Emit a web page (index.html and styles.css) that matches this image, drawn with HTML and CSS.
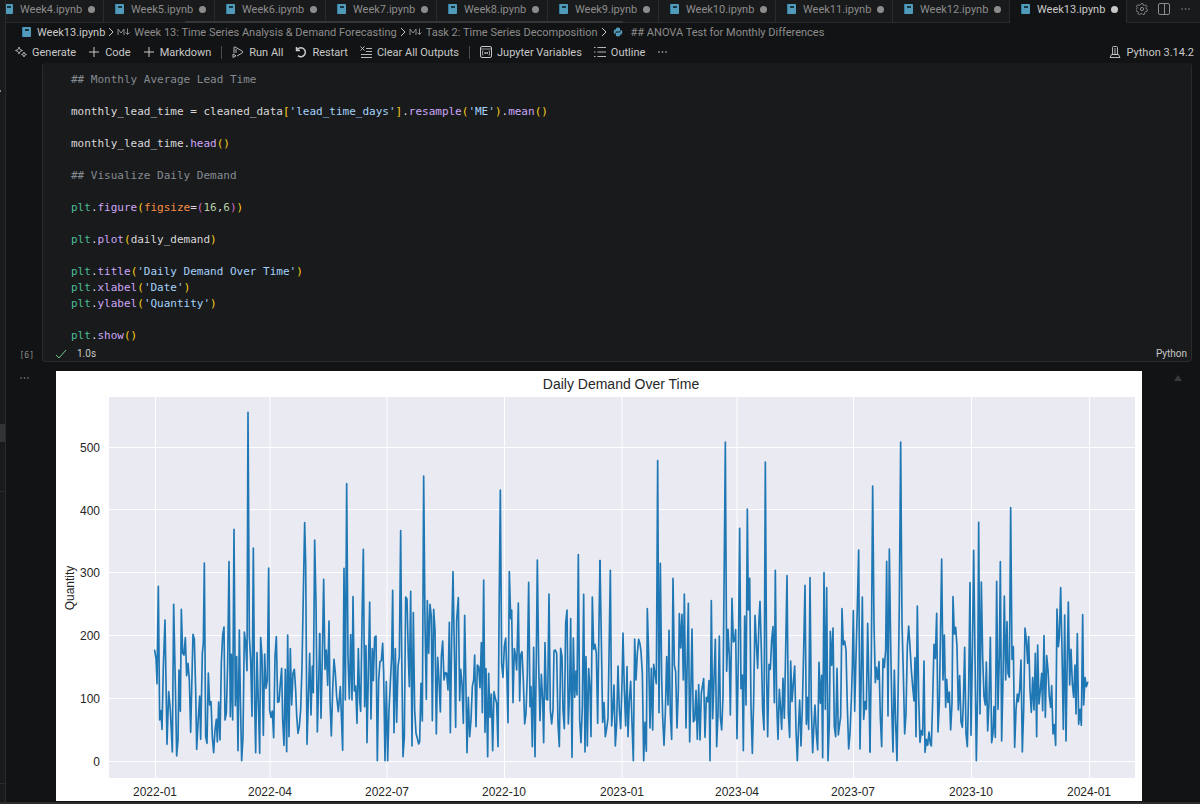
FILE: index.html
```html
<!DOCTYPE html>
<html lang="en">
<head>
    <meta charset="UTF-8">
    <title>Week13.ipynb</title>
    <link rel="stylesheet" href="styles.css">
</head>
<body>

    <!-- Shared icons -->
    <svg class="sprite" aria-hidden="true">
        <symbol id="notebook" viewBox="0 0 10 12">
            <rect x="0" y="1" width="2" height="10" fill="#2f7fa6"/>
            <rect x="1" y="1" width="8" height="10" rx="1" fill="#519aba"/>
            <rect x="3" y="3" width="4" height="2" fill="#163846"/>
        </symbol>
        <symbol id="plus" viewBox="0 0 12 12">
            <path d="M6 1v10M1 6h10" stroke="currentColor" fill="none"/>
        </symbol>
        <symbol id="more" viewBox="0 0 12 12">
            <circle cx="2" cy="6" r=".8"/><circle cx="5.500" cy="6" r=".8"/><circle cx="9" cy="6" r=".8"/>
        </symbol>
        <symbol id="chevron" viewBox="0 0 6 12">
            <path d="M1 2l4 4-4 4" stroke="currentColor" fill="none"/>
        </symbol>
        <symbol id="markdown" viewBox="0 0 13 12">
            <path d="M1 9V3l3 4 3-4v6M10.500 2.500v6M8.500 6.500l2 2 2-2" stroke="currentColor" fill="none"/>
        </symbol>
    </svg>

    <aside class="sidebar">
        <div class="sidebar-mark"></div>
        <div class="sidebar-selected"></div>
        <div class="sidebar-section"></div>
        <div class="sidebar-bottom"></div>
    </aside>

    <main class="editor">
        <header class="tab-bar">
            <div class="tabs" role="tablist">
                <button class="tab" role="tab"><svg class="file-icon"><use href="#notebook"/></svg>Week4.ipynb<span class="dot"></span></button>
                <button class="tab" role="tab"><svg class="file-icon"><use href="#notebook"/></svg>Week5.ipynb<span class="dot"></span></button>
                <button class="tab" role="tab"><svg class="file-icon"><use href="#notebook"/></svg>Week6.ipynb<span class="dot"></span></button>
                <button class="tab" role="tab"><svg class="file-icon"><use href="#notebook"/></svg>Week7.ipynb<span class="dot"></span></button>
                <button class="tab" role="tab"><svg class="file-icon"><use href="#notebook"/></svg>Week8.ipynb<span class="dot"></span></button>
                <button class="tab" role="tab"><svg class="file-icon"><use href="#notebook"/></svg>Week9.ipynb<span class="dot"></span></button>
                <button class="tab wide" role="tab"><svg class="file-icon"><use href="#notebook"/></svg>Week10.ipynb<span class="dot"></span></button>
                <button class="tab wide" role="tab"><svg class="file-icon"><use href="#notebook"/></svg>Week11.ipynb<span class="dot"></span></button>
                <button class="tab wide" role="tab"><svg class="file-icon"><use href="#notebook"/></svg>Week12.ipynb<span class="dot"></span></button>
                <button class="tab wide active" role="tab" aria-selected="true"><svg class="file-icon"><use href="#notebook"/></svg>Week13.ipynb<span class="dot"></span></button>
                <div class="tab-scroll"></div>
            </div>
            <div class="tab-actions">
                <button aria-label="Settings">
                    <svg class="icon" viewBox="0 0 12 12"><path d="M5 .7h2l.3 1.500 1 .5 1.400-.8 1.300 1.500-1 1.200.3 1.400 1.200.6-.5 1.800-1.500.1-.9 1.100.2 1.400-1.800.7-1-1.200-1.300.1-.9 1.100-1.800-.9.300-1.500-.8-1-1.500-.2-.3-1.700 1.300-.8.300-1.300-.9-1.200 1.300-1.400 1.400.7 1-.5z" stroke="currentColor" stroke-width=".9" fill="none"/><circle cx="6" cy="6" r="1.600" stroke="currentColor" fill="none"/></svg>
                </button>
                <button aria-label="Split Editor">
                    <svg class="icon" viewBox="0 0 12 12"><rect x=".5" y=".5" width="11" height="11" rx="1.500" stroke="currentColor" fill="none"/><path d="M6.500 1v10" stroke="currentColor"/></svg>
                </button>
                <button aria-label="More Actions"><svg class="icon"><use href="#more"/></svg></button>
            </div>
        </header>

        <nav class="breadcrumb">
            <a href="#" class="current"><svg class="file-icon"><use href="#notebook"/></svg>Week13.ipynb</a>
            <svg class="chevron"><use href="#chevron"/></svg>
            <a href="#"><svg class="md-icon"><use href="#markdown"/></svg>Week 13: Time Series Analysis &amp; Demand Forecasting</a>
            <svg class="chevron"><use href="#chevron"/></svg>
            <a href="#"><svg class="md-icon"><use href="#markdown"/></svg>Task 2: Time Series Decomposition</a>
            <svg class="chevron"><use href="#chevron"/></svg>
            <a href="#" class="cell-link">
                <svg class="python-icon" viewBox="0 0 12 12"><path d="M3.500 3V1.500Q6-.5 8.500 1.500V4.500Q8.500 5.500 7.500 5.500H4.500Q3 5.500 3 7v1.500H2Q-.5 6 2 3zM8.500 9v1.500Q6 12.500 3.500 10.500V7.500Q3.500 6.500 4.500 6.500H7.500Q9 6.500 9 5V3.500h1Q12.500 6 10 9z" fill="#519aba"/></svg>
                ## ANOVA Test for Monthly Differences
            </a>
        </nav>

        <div class="toolbar">
            <button>
                <svg class="icon" viewBox="0 0 12 12"><path d="M4 1l1 2.500 2.500 1L5 5.500 4 8 3 5.500.5 4.500 3 3.500zM9 6l.7 1.800 1.800.7-1.800.7L9 11l-.7-1.800-1.800-.7 1.800-.7z" stroke="currentColor" stroke-width=".8" fill="none"/></svg>
                Generate
            </button>
            <button><svg class="icon"><use href="#plus"/></svg>Code</button>
            <button><svg class="icon"><use href="#plus"/></svg>Markdown</button>
            <span class="separator"></span>
            <button>
                <svg class="icon" viewBox="0 0 12 12"><path d="M2 7V1.500Q2 .5 3 1l7.500 4.300q.9.700 0 1.400L5 10M4 3v4M1 11.500V8l3 1.800z" stroke="currentColor" stroke-width=".9" fill="none"/></svg>
                Run All
            </button>
            <button>
                <svg class="icon" viewBox="0 0 12 12"><path d="M1.500 1v3.500H5M1.800 4.300A4.500 4.500 0 1 1 3 9.700" stroke="currentColor" stroke-width="1.500" fill="none"/></svg>
                Restart
            </button>
            <button>
                <svg class="icon" viewBox="0 0 12 12"><path d="M.5.5l4 4M4.500.5l-4 4M6 2.500h6M6 5.500h6M1 8.500h11M1 11.500h11" stroke="currentColor" stroke-width=".9"/></svg>
                Clear All Outputs
            </button>
            <span class="separator"></span>
            <button>
                <svg class="icon" viewBox="0 0 12 12"><rect x=".5" y=".5" width="11" height="11" rx="1.500" stroke="currentColor" fill="none"/><path d="M1 3h10M3.500 5H2.500v4H3.500M8.500 5h1v4H8.500M4.500 6l1.300 2M5.800 6L4.500 8M6.500 6L7.800 8M7.800 6L6.500 8" stroke="currentColor" stroke-width=".7" fill="none"/></svg>
                Jupyter Variables
            </button>
            <button>
                <svg class="icon" viewBox="0 0 12 12"><path d="M0 1.500h1.500M0 6h1.500M0 10.500h1.500M3.500 1.500H12M3.500 6H12M3.500 10.500H12" stroke="currentColor" stroke-width=".9"/></svg>
                Outline
            </button>
            <button aria-label="More"><svg class="icon"><use href="#more"/></svg></button>
            <button class="kernel">
                <svg class="icon" viewBox="0 0 12 12"><path d="M3.500 8.500v-7q0-1 1-1h3q1 0 1 1v7zM5 3h2M5 5h2M6 6v2M2.500 8.500h7l1.500 3H1z" stroke="currentColor" stroke-width=".9" fill="none"/></svg>
                Python 3.14.2
            </button>
        </div>

        <section class="notebook">
            <div class="gutter"><span class="exec-count">[6]</span></div>
            <div class="cell">
<pre class="code"><code><span class="cm">## Monthly Average Lead Time</span>

monthly_lead_time = cleaned_data<span class="b1">[</span><span class="st">'lead_time_days'</span><span class="b1">]</span>.<span class="fn">resample</span><span class="b1">(</span><span class="st">'ME'</span><span class="b1">)</span>.<span class="fn">mean</span><span class="b1">()</span>

monthly_lead_time.<span class="fn">head</span><span class="b1">()</span>

<span class="cm">## Visualize Daily Demand</span>

<span class="md">plt</span>.<span class="fn">figure</span><span class="b1">(</span><span class="pr">figsize</span>=<span class="b2">(</span><span class="nu">16</span>,<span class="nu">6</span><span class="b2">)</span><span class="b1">)</span>

<span class="md">plt</span>.<span class="fn">plot</span><span class="b1">(</span>daily_demand<span class="b1">)</span>

<span class="md">plt</span>.<span class="fn">title</span><span class="b1">(</span><span class="st">'Daily Demand Over Time'</span><span class="b1">)</span>
<span class="md">plt</span>.<span class="fn">xlabel</span><span class="b1">(</span><span class="st">'Date'</span><span class="b1">)</span>
<span class="md">plt</span>.<span class="fn">ylabel</span><span class="b1">(</span><span class="st">'Quantity'</span><span class="b1">)</span>

<span class="md">plt</span>.<span class="fn">show</span><span class="b1">()</span></code></pre>
                <div class="cell-status">
                    <svg class="check" viewBox="0 0 12 12"><path d="M1 7l3 3 7-8" stroke="#73c991" fill="none"/></svg>
                    <span>1.0s</span>
                    <button class="language">Python</button>
                </div>
            </div>

            <div class="gutter"><button class="output-menu" aria-label="Output actions"><svg class="icon"><use href="#more"/></svg></button></div>
            <div class="output">
                <svg class="chart" viewBox="0 0 1086 430" role="img" aria-label="Daily Demand Over Time">
                    <rect width="1086" height="430" fill="#fff"/>
                    <rect x="53" y="26" width="1026" height="381" fill="#eaeaf2"/>
                    <path class="grid" d="M53 76.500h1026M53 138.500h1026M53 201.500h1026M53 264.500h1026M53 327.500h1026M53 390.500h1026M99.500 26v381M214 26v381M331 26v381M448.500 26v381M566 26v381M681 26v381M797.500 26v381M915.500 26v381M1033.500 26v381"/>

                    <!-- Daily series, half a year per path -->
                    <svg x="0" y="0" width="1086" height="430" viewBox="0 0 3258 1290">
                        <g class="series">
                            <path transform="translate(-18 57)" d="M314 781 318 805 321 881 325 589 329 990 333 962 336 1018 340 830 345 690 351 1063 356 905 361 960 367 1086 371 643 376 880 380 1098 384 1050 387 840 391 964 394 658 398 790 402 795 406 743 410 857 414 820 418 870 422 1027 425 900 429 733 433 748 437 900 440 1078 444 1000 449 918 452 1048 457 790 460 760 463 519 467 1040 471 1060 475 849 479 945 483 935 487 1040 491 1088 495 1020 499 988 502 1056 506 936 510 1050 514 820 518 735 522 711 525 990 529 970 533 820 537 515 541 980 544 793 548 990 552 418 556 947 560 800 564 1082 568 720 571 920 575 1112 579 1040 583 726 587 760 591 842 594 67 598 740 602 810 606 979 610 474 614 940 617 1088 621 788 625 940 629 1090 632 743 636 800 640 1036 644 792 648 895 652 870 656 534 659 960 663 982 667 963 671 1043 675 800 679 740 683 937 687 935 691 880 695 835 698 990 702 1066 706 838 710 1085 713 735 717 1040 721 776 725 945 729 850 733 838 737 900 740 975 744 1030 748 1010 752 960 756 830 760 610 764 398 767 520 771 1063 775 930 779 790 783 975 787 828 790 908 794 450 798 640 802 1026 806 880 809 731"/>
                            <path transform="translate(792 57)" d="M-1 731 3 985 7 800 11 568 15 838 19 780 23 886 27 693 30 930 34 1038 38 900 42 808 46 850 50 920 55 965 61 890 68 1081 72 535 76 930 80 281 84 800 88 927 92 734 96 930 99 620 103 903 107 888 111 1000 115 776 119 930 122 964 126 700 130 478 134 950 138 767 141 1058 145 850 149 636 153 987 157 776 160 872 164 742 168 738 172 1112 176 870 180 815 184 812 188 760 191 850 195 1112 199 875 203 1112 207 960 211 880 215 800 218 601 222 1028 226 776 230 997 234 830 238 800 242 422 245 780 249 1100 253 1040 257 621 261 627 265 800 268 890 272 604 276 1068 280 668 284 960 288 1030 292 1045 296 1062 299 1055 303 880 307 993 311 258 315 700 319 928 322 632 326 790 330 643 334 680 337 992 341 658 345 720 349 1032 353 802 357 870 361 966 364 800 368 753 372 870 376 848 380 850 384 900 388 697 391 1028 395 750 399 545 403 780 407 1012 410 690 415 623 419 932 422 838 426 880 430 1000 434 676 438 900 441 1088 445 922 449 1040 453 990 457 890 461 870 464 795 468 1010 472 825 476 830 480 893 484 758 487 968 491 570 495 1027 498 836 503 1100 506 850 510 982 514 912 518 1082 522 905 526 925 530 940 534 1070 537 700 541 300 545 820 549 862 553 770 557 744 561 870 564 998 568 545 572 686 575 660 579 938 583 776 587 800 590 840 595 639 599 933 602 795 606 785 610 870 614 1002 618 970 622 850 626 577 630 950 633 890 637 1070 641 772 645 1100 649 800 652 510 656 820 660 992 664 853 668 930 671 1058 675 758 679 928 683 930 687 612 691 960 695 1002 699 960 702 782 706 780 710 790 714 1000 718 1070 722 775 726 800 729 960 733 1016 737 700 741 660 745 1002 749 900 752 686 756 1102 760 744 764 922 768 843 771 915 775 494 779 990 783 1058 787 950 791 613 795 1086 798 800 802 1068 806 836 810 900 813 1040 817 621 821 778 825 763 829 790 833 1000 837 700 840 512"/>
                            <path transform="translate(1602 57)" d="M30 512 34 750 38 997 42 938 46 1040 50 1015 54 985 57 800 61 541 65 1008 69 950 72 885 76 1068 80 1000 84 828 88 960 92 1016 96 880 99 729 103 900 107 1008 111 830 114 1040 118 930 122 874 126 1000 130 1112 134 747 138 870 142 790 146 748 150 762 153 785 157 850 161 1112 165 997 169 1084 172 656 176 800 180 1014 184 835 188 1020 191 823 195 850 199 881 203 212 207 968 211 520 215 860 218 980 222 1066 226 970 230 800 234 945 237 721 241 970 245 1048 249 565 253 825 257 845 261 1014 265 900 268 671 272 774 276 673 280 870 283 612 288 1014 291 850 295 640 299 1056 303 880 306 717 310 995 314 990 318 902 322 1048 326 884 330 1050 334 910 337 890 341 866 345 1042 349 922 353 935 357 872 360 1112 364 632 368 986 372 870 376 748 380 1070 384 970 388 738 391 980 395 1020 399 920 403 500 406 156 410 844 414 718 418 800 421 975 426 625 430 756 434 750 437 719 441 1046 445 800 449 415 453 896 457 855 460 1082 464 678 468 945 472 357 475 660 479 565 483 950 487 1090 491 930 495 676 499 760 503 835 507 690 510 634 514 780 518 960 522 1020 526 216 530 860 533 1040 537 823 541 838 545 750 549 710 553 938 556 541 560 940 564 1048 568 898 572 960 575 1018 579 865 583 985 587 780 591 557 595 970 599 1042 602 813 606 935 610 880 614 828 618 1020 622 1112 626 1000 629 930 633 1068 637 950 641 780 645 586 649 1003 652 922 656 1018 660 563 664 950 668 1088 672 1000 675 945 679 1030 683 1080 687 817 691 940 695 856 698 1103 702 548 706 958 710 593 714 1112 718 1000 721 724 725 826 729 714 733 1010 737 1040 741 835 745 1035 748 1010 752 980 756 656 760 764 764 753 768 780 772 950 776 1077 780 1030 784 930 787 830 790 662 794 964 798 800 802 650 806 480 810 1077 813 900 817 621 821 988 825 935 829 958 833 700 837 900 840 1086"/>
                            <path transform="translate(2412 57)" d="M30 1086 34 800 38 288 42 700 46 878 49 832 53 868 57 815 61 980 65 1070 69 806 73 832 77 780 80 514 84 978 88 477 92 760 96 980 99 1086 103 840 107 1000 111 1112 115 860 118 640 122 156 126 700 130 850 134 1032 138 970 142 770 146 708 150 770 154 840 158 890 162 933 165 803 168 1040 172 648 176 920 180 1057 184 1022 188 1035 192 813 195 1087 199 1048 203 1066 207 1026 211 1062 214 1068 218 930 222 763 226 805 230 670 234 1026 238 940 241 760 245 507 249 870 253 735 257 952 260 868 264 937 268 906 272 1020 276 940 279 620 283 732 287 712 291 770 295 960 299 857 303 995 307 1012 310 940 314 772 318 1030 322 1070 326 900 330 578 333 1036 337 800 341 481 345 800 349 1112 353 900 356 397 360 972 364 576 368 800 372 920 376 945 379 816 383 1023 387 940 391 742 395 1058 399 1030 402 950 406 1042 410 574 414 958 418 800 421 515 425 1053 429 870 433 618 437 870 441 695 444 850 448 862 452 353 456 808 460 770 464 1072 468 960 472 912 475 935 479 900 483 810 487 1086 491 960 495 714 499 750 503 820 506 740 510 900 514 967 518 863 522 960 526 790 530 1040 533 765 537 942 541 900 545 850 548 962 552 737 556 982 560 797 564 840 568 920 572 952 575 887 579 1032 583 1004 587 1066 591 657 595 770 598 740 602 593 606 780 610 1018 614 675 618 1053 621 850 625 636 629 885 633 778 637 880 641 922 645 825 648 972 652 731 656 1003 660 958 664 1006 668 674 671 945 675 863 679 890 683 877"/>
                        </g>
                    </svg>

                    <text class="title" x="565" y="18">Daily Demand Over Time</text>
                    <text class="axis" transform="translate(18 217) rotate(-90)">Quantity</text>
                    <g class="ticks-y">
                        <text x="44" y="81">500</text>
                        <text x="44" y="144">400</text>
                        <text x="44" y="206">300</text>
                        <text x="44" y="269">200</text>
                        <text x="44" y="332">100</text>
                        <text x="44" y="395">0</text>
                    </g>
                    <g class="axis">
                        <text x="99" y="425">2022-01</text>
                        <text x="214" y="425">2022-04</text>
                        <text x="331" y="425">2022-07</text>
                        <text x="448" y="425">2022-10</text>
                        <text x="566" y="425">2023-01</text>
                        <text x="681" y="425">2023-04</text>
                        <text x="797" y="425">2023-07</text>
                        <text x="915" y="425">2023-10</text>
                        <text x="1033" y="425">2024-01</text>
                    </g>
                </svg>
                <span class="scroll-arrow"></span>
            </div>
        </section>
    </main>

</body>
</html>
```
FILE: styles.css
```css
:root {
    --editor-bg: #121314;
    --panel-bg: #191a1b;
    --border: #2a2b2c;
    --text: #c8c8c8;
    --muted: #8c8c8c;
}

* {
    box-sizing: border-box;
}

body {
    margin: 0;
    height: 100vh;
    display: flex;
    overflow: hidden;
    background-color: var(--editor-bg);
    color: var(--text);
    font-family: Roboto, "Segoe UI", sans-serif;
    font-size: 11px;
}

button {
    display: flex;
    align-items: center;
    padding: 0;
    border: none;
    background: none;
    color: inherit;
    font: inherit;
    white-space: nowrap;
    cursor: pointer;
}

a {
    color: inherit;
    text-decoration: none;
}

.sprite {
    position: absolute;
    width: 0;
    height: 0;
}

svg {
    flex: none;
}

.icon {
    width: 12px;
    height: 12px;
    fill: currentColor;
}

.file-icon {
    width: 10px;
    height: 12px;
}

/* Sidebar edge */
.sidebar {
    flex: none;
    width: 6px;
    display: flex;
    flex-direction: column;
    background-color: var(--panel-bg);
    border-right: 1px solid var(--border);
}

.sidebar-mark {
    width: 1px;
    height: 2px;
    margin-top: 90px;
    background-color: var(--muted);
}

.sidebar-selected {
    height: 18px;
    margin-top: 332px;
    background-color: #323334;
}

.sidebar-section {
    height: 50px;
    border-bottom: 1px solid var(--border);
}

.sidebar-bottom {
    margin-top: auto;
    height: 21px;
    border-top: 1px solid var(--border);
    border-bottom: 2px solid var(--border);
}

.editor {
    flex: 1;
    min-width: 0;
    display: flex;
    flex-direction: column;
    border-bottom: 2px solid var(--border);
}

/* Tabs */
.tab-bar {
    flex: none;
    display: flex;
    height: 23px;
    background-color: var(--panel-bg);
}

.tabs {
    position: relative;
    flex: 1;
    display: flex;
    justify-content: flex-end;
    overflow: hidden;
}

.tab {
    flex: none;
    width: 111px;
    gap: 6px;
    padding: 0 8px 4px 11px;
    border-right: 1px solid var(--border);
    border-bottom: 1px solid var(--border);
    color: var(--muted);
}

.tab.wide {
    width: 117px;
}

.tab.active {
    background-color: var(--editor-bg);
    border-bottom-color: var(--editor-bg);
    color: var(--text);
}

.dot {
    flex: none;
    width: 7px;
    height: 7px;
    margin-left: auto;
    border-radius: 50%;
    background-color: currentColor;
}

.tab-scroll {
    position: absolute;
    left: 16%;
    bottom: 0;
    width: 39%;
    height: 2px;
    background-color: #343536;
}

.tab-actions {
    flex: none;
    display: flex;
    justify-content: flex-end;
    gap: 10px;
    width: 73px;
    padding: 0 8px 4px 0;
    border-bottom: 1px solid var(--border);
    color: var(--muted);
}

/* Breadcrumb */
.breadcrumb {
    flex: none;
    display: flex;
    align-items: center;
    gap: 3px;
    height: 18px;
    padding-left: 16px;
    color: var(--muted);
    white-space: nowrap;
}

.breadcrumb a {
    display: flex;
    align-items: center;
    gap: 4px;
}

.breadcrumb .current {
    gap: 5px;
    color: var(--text);
}

.breadcrumb .cell-link {
    gap: 8px;
    padding-left: 3px;
}

.chevron {
    width: 6px;
    height: 12px;
    color: var(--text);
}

.md-icon {
    width: 13px;
    height: 12px;
}

.python-icon {
    width: 10px;
    height: 10px;
}

/* Notebook toolbar */
.toolbar {
    flex: none;
    display: flex;
    align-items: center;
    gap: 12px;
    height: 22px;
    padding: 0 6px 0 9px;
}

.toolbar button {
    gap: 5px;
}

.separator {
    width: 1px;
    height: 13px;
    margin: 0 -2px;
    background-color: #4a4b4c;
}

.toolbar .kernel {
    gap: 6px;
    margin-left: auto;
}

/* Notebook */
.notebook {
    display: grid;
    grid-template-columns: 36px 1fr;
    row-gap: 9px;
    padding-right: 8px;
}

.gutter {
    display: flex;
    align-items: flex-end;
    justify-content: flex-end;
    padding: 0 8px 2px 0;
    color: var(--muted);
}

.exec-count {
    font-family: "DejaVu Sans Mono", monospace;
    font-size: 8px;
}

.output-menu {
    align-self: flex-start;
    justify-content: center;
    width: 18px;
    height: 14px;
}

.cell {
    background-color: var(--panel-bg);
    border: 1px solid var(--border);
    border-top-color: var(--panel-bg);
    border-radius: 4px;
}

.code {
    margin: 0;
    padding: 8px 0 0 28px;
    font-family: "DejaVu Sans Mono", monospace;
    font-size: 11px;
    line-height: 16px;
    color: #d8d8d8;
}

.code code {
    font-family: inherit;
}

.cm { color: #858b93; }
.fn { color: #cda6f8; }
.st { color: #a5d2fa; }
.md { color: #4ebc97; }
.pr { color: #f58e44; }
.nu { color: #b5cea8; }
.b1 { color: #f8d01c; }
.b2 { color: #d070cc; }

.cell-status {
    display: flex;
    align-items: center;
    gap: 10px;
    height: 17px;
    padding: 2px 4px 0 12px;
    font-size: 10px;
}

.check {
    width: 12px;
    height: 12px;
}

.language {
    margin-left: auto;
}

.output {
    display: flex;
    align-items: flex-start;
    padding-left: 14px;
}

.chart {
    flex: 1 1 0;
    min-width: 0;
    font-family: "Liberation Sans", Arial, sans-serif;
    font-size: 12px;
    fill: #262626;
}

.scroll-arrow {
    margin: 4px 10px 0 32px;
    border: 4px solid transparent;
    border-top-width: 0;
    border-bottom: 6px solid #38393a;
}

.grid {
    stroke: #fff;
    stroke-width: 1;
    fill: none;
}

.series {
    stroke: #1f77b4;
    stroke-width: 5;
    stroke-linejoin: round;
    stroke-linecap: round;
    fill: none;
}

.title {
    font-size: 14px;
    text-anchor: middle;
}

.axis {
    text-anchor: middle;
}

.ticks-y {
    text-anchor: end;
}
```
